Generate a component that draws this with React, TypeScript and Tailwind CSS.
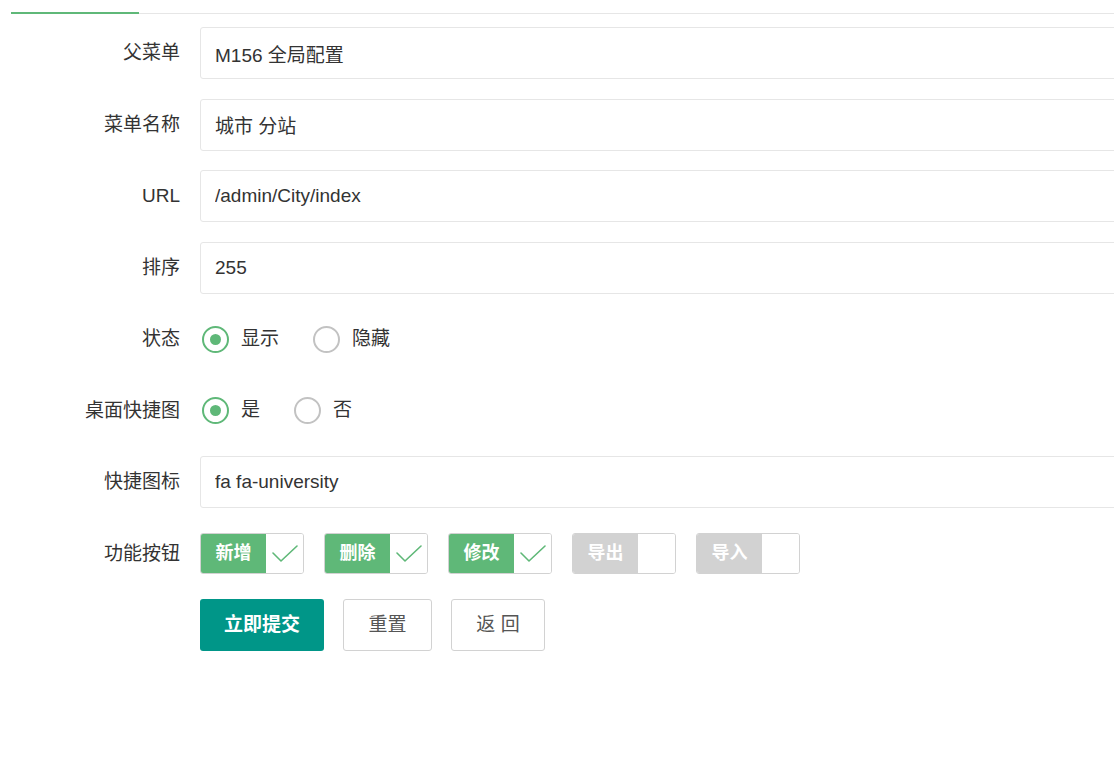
import React, { useState } from "react";

const font = { fontFamily: '"Liberation Sans", "Noto Sans CJK SC", sans-serif' };

function Row({ label, children }: { label: string; children: React.ReactNode }) {
  return (
    <div className="flex items-center h-[52px] mb-[19.5px]">
      <label className="w-[200px] shrink-0 pr-[20px] pt-px text-right text-[19px] text-[#333]">
        {label}
      </label>
      <div className="flex-1 min-w-0 flex items-center h-full">{children}</div>
    </div>
  );
}

function TextInput({ value }: { value: string }) {
  return (
    <input
      defaultValue={value}
      className="w-[960px] shrink-0 h-[52px] border border-[#e6e6e6] rounded-[3px] px-[14px] text-[19px] text-[#333] outline-none"
      style={font}
    />
  );
}

function Radio({
  label,
  checked,
  onClick,
}: {
  label: string;
  checked: boolean;
  onClick: () => void;
}) {
  return (
    <div className="flex items-center ml-[2px] mr-[32px] cursor-pointer" onClick={onClick}>
      <span
        className={`w-[27px] h-[27px] rounded-full border-2 flex items-center justify-center ${
          checked ? "border-[#5FB878]" : "border-[#c2c2c2]"
        }`}
      >
        {checked && <span className="w-[11px] h-[11px] rounded-full bg-[#5FB878]" />}
      </span>
      <span className="ml-[12px] text-[19px] text-[#333]">{label}</span>
    </div>
  );
}

function Switch({ label, on }: { label: string; on: boolean }) {
  return (
    <div className="flex w-[104px] h-[41px] mr-[20px] rounded-[3px] border border-[#d2d2d2] overflow-hidden shrink-0">
      <div
        className={`w-[65px] flex items-center justify-center text-white text-[18px] font-bold ${
          on ? "bg-[#5FB878]" : "bg-[#d2d2d2]"
        }`}
      >
        {label}
      </div>
      <div className="flex-1 bg-white flex items-center justify-center">
        {on && (
          <svg width="26" height="20" viewBox="0 0 26 20" fill="none">
            <polyline
              points="1,9 9,17 25,2"
              stroke="#5FB878"
              strokeWidth="1.6"
              strokeLinecap="round"
              strokeLinejoin="round"
            />
          </svg>
        )}
      </div>
    </div>
  );
}

export default function App() {
  const [status, setStatus] = useState(1);
  const [desk, setDesk] = useState(1);

  return (
    <div className="w-[1114px] h-[769px] bg-white overflow-hidden" style={font}>
      <div className="flex items-end h-[14px]">
        <div className="w-[11px]" />
        <div className="w-[128px] h-[2px] bg-[#5FB878]" />
        <div className="flex-1 h-px bg-[#e6e6e6]" />
      </div>

      <div className="pt-[13px]">
        <Row label="父菜单">
          <TextInput value="M156 全局配置" />
        </Row>
        <Row label="菜单名称">
          <TextInput value="城市 分站" />
        </Row>
        <Row label="URL">
          <TextInput value="/admin/City/index" />
        </Row>
        <Row label="排序">
          <TextInput value="255" />
        </Row>
        <Row label="状态">
          <Radio label="显示" checked={status === 1} onClick={() => setStatus(1)} />
          <Radio label="隐藏" checked={status === 0} onClick={() => setStatus(0)} />
        </Row>
        <Row label="桌面快捷图">
          <Radio label="是" checked={desk === 1} onClick={() => setDesk(1)} />
          <Radio label="否" checked={desk === 0} onClick={() => setDesk(0)} />
        </Row>
        <Row label="快捷图标">
          <TextInput value="fa fa-university" />
        </Row>
        <Row label="功能按钮">
          <Switch label="新增" on />
          <Switch label="删除" on />
          <Switch label="修改" on />
          <Switch label="导出" on={false} />
          <Switch label="导入" on={false} />
        </Row>
        <div className="flex items-center h-[52px]">
          <div className="w-[200px] shrink-0" />
          <button className="h-[52px] w-[124px] rounded-[3px] bg-[#009688] text-white text-[19px] font-bold mr-[19px]">
            立即提交
          </button>
          <button className="h-[52px] w-[89px] rounded-[3px] border border-[#d2d2d2] bg-white text-[#555] text-[19px] mr-[19px]">
            重置
          </button>
          <button className="h-[52px] w-[94px] rounded-[3px] border border-[#d2d2d2] bg-white text-[#555] text-[19px]">
            返 回
          </button>
        </div>
      </div>
    </div>
  );
}
